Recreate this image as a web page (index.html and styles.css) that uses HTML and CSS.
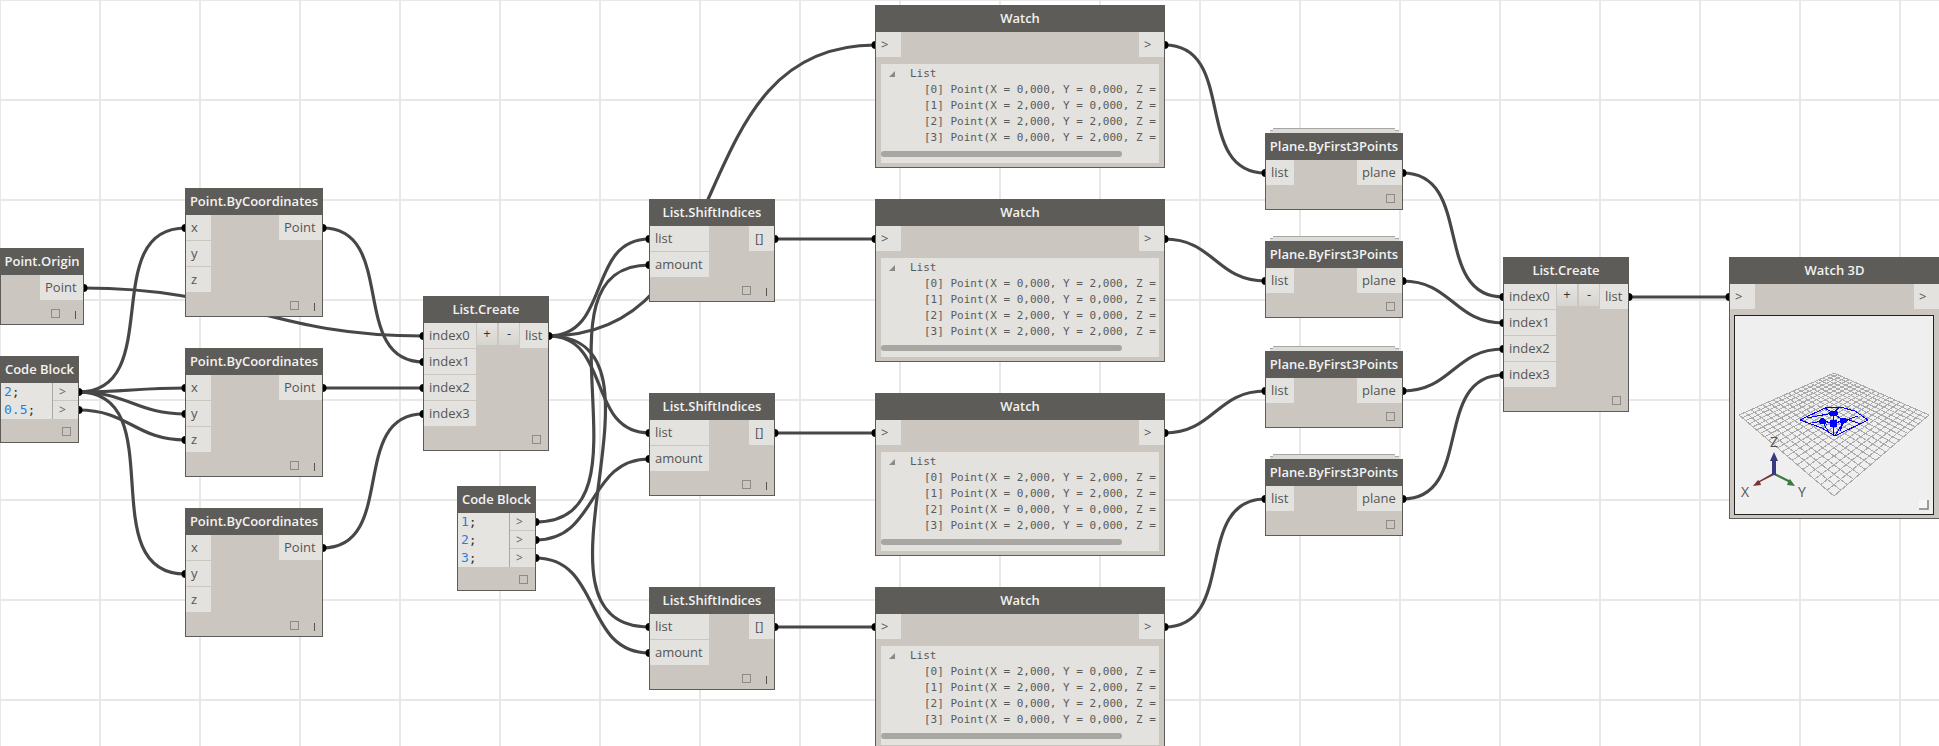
FILE: index.html
```html
<!DOCTYPE html>
<html lang="en">
<head>
    <meta charset="UTF-8">
    <title>Dynamo graph</title>
    <link rel="stylesheet" href="styles.css">
</head>
<body>
    <div class="canvas">
        <svg class="wires" id="wires" width="1939" height="746"></svg>

        <div class="node n-origin">
            <div class="title">Point.Origin</div>
            <div class="ports">
                <div class="outs"><div class="port out-point" data-port="origin.out">Point</div></div>
            </div>
            <div class="foot"><i class="box"></i><i class="lace"></i></div>
        </div>

        <div class="node n-code1">
            <div class="title">Code Block</div>
            <div class="code">
                <div class="code-text"><div><b>2</b>;</div><div><b>0.5</b>;</div></div>
                <div class="code-outs">
                    <div class="code-out" data-port="code1.0">&gt;</div>
                    <div class="code-out" data-port="code1.1">&gt;</div>
                </div>
            </div>
            <div class="foot"><i class="box"></i></div>
        </div>

        <div class="node n-pt1">
            <div class="title">Point.ByCoordinates</div>
            <div class="ports">
                <div class="ins">
                    <div class="port in-xyz" data-port="pt1.x">x</div>
                    <div class="port in-xyz" data-port="pt1.y">y</div>
                    <div class="port in-xyz" data-port="pt1.z">z</div>
                </div>
                <div class="outs"><div class="port out-point" data-port="pt1.out">Point</div></div>
            </div>
            <div class="foot"><i class="box"></i><i class="lace"></i></div>
        </div>

        <div class="node n-pt2">
            <div class="title">Point.ByCoordinates</div>
            <div class="ports">
                <div class="ins">
                    <div class="port in-xyz" data-port="pt2.x">x</div>
                    <div class="port in-xyz" data-port="pt2.y">y</div>
                    <div class="port in-xyz" data-port="pt2.z">z</div>
                </div>
                <div class="outs"><div class="port out-point" data-port="pt2.out">Point</div></div>
            </div>
            <div class="foot"><i class="box"></i><i class="lace"></i></div>
        </div>

        <div class="node n-pt3">
            <div class="title">Point.ByCoordinates</div>
            <div class="ports">
                <div class="ins">
                    <div class="port in-xyz" data-port="pt3.x">x</div>
                    <div class="port in-xyz" data-port="pt3.y">y</div>
                    <div class="port in-xyz" data-port="pt3.z">z</div>
                </div>
                <div class="outs"><div class="port out-point" data-port="pt3.out">Point</div></div>
            </div>
            <div class="foot"><i class="box"></i><i class="lace"></i></div>
        </div>

        <div class="node n-create1">
            <div class="title">List.Create</div>
            <div class="ports">
                <div class="ins">
                    <div class="port in-index" data-port="create1.0">index0</div>
                    <div class="port in-index" data-port="create1.1">index1</div>
                    <div class="port in-index" data-port="create1.2">index2</div>
                    <div class="port in-index" data-port="create1.3">index3</div>
                </div>
                <div class="btns"><div class="btn">+</div><div class="btn">-</div></div>
                <div class="outs"><div class="port out-list" data-port="create1.out">list</div></div>
            </div>
            <div class="foot"><i class="box"></i></div>
        </div>

        <div class="node n-code2">
            <div class="title">Code Block</div>
            <div class="code">
                <div class="code-text"><div><b>1</b>;</div><div><b>2</b>;</div><div><b>3</b>;</div></div>
                <div class="code-outs">
                    <div class="code-out" data-port="code2.0">&gt;</div>
                    <div class="code-out" data-port="code2.1">&gt;</div>
                    <div class="code-out" data-port="code2.2">&gt;</div>
                </div>
            </div>
            <div class="foot"><i class="box"></i></div>
        </div>

        <div class="node n-shift1">
            <div class="title">List.ShiftIndices</div>
            <div class="ports">
                <div class="ins">
                    <div class="port in-shift" data-port="shift1.list">list</div>
                    <div class="port in-shift" data-port="shift1.amount">amount</div>
                </div>
                <div class="outs"><div class="port out-arr" data-port="shift1.out">[]</div></div>
            </div>
            <div class="foot"><i class="box"></i><i class="lace"></i></div>
        </div>

        <div class="node n-shift2">
            <div class="title">List.ShiftIndices</div>
            <div class="ports">
                <div class="ins">
                    <div class="port in-shift" data-port="shift2.list">list</div>
                    <div class="port in-shift" data-port="shift2.amount">amount</div>
                </div>
                <div class="outs"><div class="port out-arr" data-port="shift2.out">[]</div></div>
            </div>
            <div class="foot"><i class="box"></i><i class="lace"></i></div>
        </div>

        <div class="node n-shift3">
            <div class="title">List.ShiftIndices</div>
            <div class="ports">
                <div class="ins">
                    <div class="port in-shift" data-port="shift3.list">list</div>
                    <div class="port in-shift" data-port="shift3.amount">amount</div>
                </div>
                <div class="outs"><div class="port out-arr" data-port="shift3.out">[]</div></div>
            </div>
            <div class="foot"><i class="box"></i><i class="lace"></i></div>
        </div>

        <div class="node n-watch1">
            <div class="title">Watch</div>
            <div class="ports">
                <div class="ins"><div class="port in-arrow" data-port="watch1.in">&gt;</div></div>
                <div class="outs"><div class="port in-arrow" data-port="watch1.out">&gt;</div></div>
            </div>
            <div class="panel">
                <div class="list-head"><i class="twist"></i>List</div>
                <div class="item">[0] Point(X = 0,000, Y = 0,000, Z =</div>
                <div class="item">[1] Point(X = 2,000, Y = 0,000, Z =</div>
                <div class="item">[2] Point(X = 2,000, Y = 2,000, Z =</div>
                <div class="item">[3] Point(X = 0,000, Y = 2,000, Z =</div>
                <div class="scroll"></div>
            </div>
        </div>

        <div class="node n-watch2">
            <div class="title">Watch</div>
            <div class="ports">
                <div class="ins"><div class="port in-arrow" data-port="watch2.in">&gt;</div></div>
                <div class="outs"><div class="port in-arrow" data-port="watch2.out">&gt;</div></div>
            </div>
            <div class="panel">
                <div class="list-head"><i class="twist"></i>List</div>
                <div class="item">[0] Point(X = 0,000, Y = 2,000, Z =</div>
                <div class="item">[1] Point(X = 0,000, Y = 0,000, Z =</div>
                <div class="item">[2] Point(X = 2,000, Y = 0,000, Z =</div>
                <div class="item">[3] Point(X = 2,000, Y = 2,000, Z =</div>
                <div class="scroll"></div>
            </div>
        </div>

        <div class="node n-watch3">
            <div class="title">Watch</div>
            <div class="ports">
                <div class="ins"><div class="port in-arrow" data-port="watch3.in">&gt;</div></div>
                <div class="outs"><div class="port in-arrow" data-port="watch3.out">&gt;</div></div>
            </div>
            <div class="panel">
                <div class="list-head"><i class="twist"></i>List</div>
                <div class="item">[0] Point(X = 2,000, Y = 2,000, Z =</div>
                <div class="item">[1] Point(X = 0,000, Y = 2,000, Z =</div>
                <div class="item">[2] Point(X = 0,000, Y = 0,000, Z =</div>
                <div class="item">[3] Point(X = 2,000, Y = 0,000, Z =</div>
                <div class="scroll"></div>
            </div>
        </div>

        <div class="node n-watch4">
            <div class="title">Watch</div>
            <div class="ports">
                <div class="ins"><div class="port in-arrow" data-port="watch4.in">&gt;</div></div>
                <div class="outs"><div class="port in-arrow" data-port="watch4.out">&gt;</div></div>
            </div>
            <div class="panel">
                <div class="list-head"><i class="twist"></i>List</div>
                <div class="item">[0] Point(X = 2,000, Y = 0,000, Z =</div>
                <div class="item">[1] Point(X = 2,000, Y = 2,000, Z =</div>
                <div class="item">[2] Point(X = 0,000, Y = 2,000, Z =</div>
                <div class="item">[3] Point(X = 0,000, Y = 0,000, Z =</div>
                <div class="scroll"></div>
            </div>
        </div>

        <div class="node stacked n-plane1">
            <div class="title">Plane.ByFirst3Points</div>
            <div class="ports">
                <div class="ins"><div class="port in-list" data-port="plane1.in">list</div></div>
                <div class="outs"><div class="port out-plane" data-port="plane1.out">plane</div></div>
            </div>
            <div class="foot"><i class="box"></i></div>
        </div>

        <div class="node stacked n-plane2">
            <div class="title">Plane.ByFirst3Points</div>
            <div class="ports">
                <div class="ins"><div class="port in-list" data-port="plane2.in">list</div></div>
                <div class="outs"><div class="port out-plane" data-port="plane2.out">plane</div></div>
            </div>
            <div class="foot"><i class="box"></i></div>
        </div>

        <div class="node stacked n-plane3">
            <div class="title">Plane.ByFirst3Points</div>
            <div class="ports">
                <div class="ins"><div class="port in-list" data-port="plane3.in">list</div></div>
                <div class="outs"><div class="port out-plane" data-port="plane3.out">plane</div></div>
            </div>
            <div class="foot"><i class="box"></i></div>
        </div>

        <div class="node stacked n-plane4">
            <div class="title">Plane.ByFirst3Points</div>
            <div class="ports">
                <div class="ins"><div class="port in-list" data-port="plane4.in">list</div></div>
                <div class="outs"><div class="port out-plane" data-port="plane4.out">plane</div></div>
            </div>
            <div class="foot"><i class="box"></i></div>
        </div>

        <div class="node n-create2">
            <div class="title">List.Create</div>
            <div class="ports">
                <div class="ins">
                    <div class="port in-index" data-port="create2.0">index0</div>
                    <div class="port in-index" data-port="create2.1">index1</div>
                    <div class="port in-index" data-port="create2.2">index2</div>
                    <div class="port in-index" data-port="create2.3">index3</div>
                </div>
                <div class="btns"><div class="btn">+</div><div class="btn">-</div></div>
                <div class="outs"><div class="port out-list" data-port="create2.out">list</div></div>
            </div>
            <div class="foot"><i class="box"></i></div>
        </div>

        <div class="node n-watch3d">
            <div class="title">Watch 3D</div>
            <div class="ports">
                <div class="ins"><div class="port in-arrow" data-port="view.in">&gt;</div></div>
                <div class="outs"><div class="port in-arrow">&gt;</div></div>
            </div>
            <div class="view">
                <svg id="scene" width="198" height="198" viewBox="1 1 198 198">
                    <g id="floor" class="floor"></g>
                    <g class="planes">
                        <path d="M66 105 L91 93 L106 92 L121 96 L134 105 L101 121 L88 113 Z"/>
                        <path d="M73 103 L99 98 L110 106 L101 121 M78 108 L88 106 L99 108 L110 106 L124 101 M88 106 L94 116 M99 98 L99 121 M91 93 L99 98 L106 92 M110 106 L106 116 M112 104 L127 109"/>
                        <path class="blob" d="M95 98 L99 96 L103 97 L104 99 L100 101 L96 100 Z"/>
                        <path class="blob" d="M85 107 L88 103 L91 105 L92 109 L86 108 Z"/>
                        <path class="blob" d="M106 104 L110 103 L114 105 L109 109 L106 107 Z"/>
                        <rect x="96" y="105" width="7" height="7"/>
                    </g>
                    <path class="axis-x" d="M40 160 L26 167 L27 170 L19 171 L24 165 L25 166 L39 158 Z"/>
                    <path class="axis-y" d="M41 158 L55 165 L56 164 L61 171 L53 170 L54 167 L40 160 Z"/>
                    <path class="axis-z" d="M38 160 L38 146 L36 146 L40 137 L44 146 L42 146 L42 160 Z"/>
                    <text class="axis-label" x="40" y="132">Z</text>
                    <text class="axis-label" x="11" y="182">X</text>
                    <text class="axis-label" x="68" y="182">Y</text>
                    <rect class="grip" x="185" y="185" width="10" height="10"/>
                    <path class="grip-edge" d="M185 194 H194 V185"/>
                </svg>
            </div>
        </div>
    </div>
    <script src="script.js"></script>
</body>
</html>
```

FILE: styles.css
```css
* {
    margin: 0;
    padding: 0;
    box-sizing: border-box;
}

body {
    font-family: "Open Sans", sans-serif;
    background-color: white;
}

.canvas {
    position: relative;
    z-index: 0;
    width: 1939px;
    height: 746px;
    overflow: hidden;
    background-color: white;
    background-image:
        linear-gradient(90deg, #e8e8e8 2px, transparent 2px),
        linear-gradient(#e8e8e8 2px, transparent 2px);
    background-size: 100px 100px;
    background-position: -1px -1px;
}

.wires {
    position: absolute;
    left: 0;
    top: 0;
}

.wire {
    fill: none;
    stroke: #474747;
    stroke-width: 3.2;
}

.dot {
    fill: #000;
}

/* nodes */

.node {
    position: absolute;
    display: flex;
    flex-direction: column;
    background-color: #cbc7c0;
    border: 1px solid #5e5c59;
    border-top: 0;
}

.title {
    height: 27px;
    margin: 0 -1px;
    background-color: #5e5c59;
    color: #f2f2f0;
    font-size: 13px;
    font-weight: 600;
    line-height: 27px;
    text-align: center;
    white-space: nowrap;
}

.ports {
    display: flex;
    justify-content: space-between;
}

.ins {
    display: flex;
    flex-direction: column;
}

.outs {
    margin-left: auto;
}

.port {
    height: 25px;
    margin-bottom: 1px;
    padding-left: 5px;
    background-color: #e3e2de;
    color: #555;
    font-size: 13px;
    line-height: 24px;
}

.in-xyz { width: 25px; }
.in-index { width: 52px; }
.in-shift { width: 59px; }
.in-list { width: 28px; }
.in-arrow { width: 25px; padding-left: 5px; }
.out-point { width: 43px; }
.out-list { width: 28px; }
.out-plane { width: 45px; }
.out-arr { width: 25px; padding-left: 6px; }

.btns {
    display: flex;
    gap: 2px;
    margin-left: 1px;
    margin-right: 1px;
}

.btn {
    width: 20px;
    height: 22px;
    background: linear-gradient(#e6e5e1, #d6d4cf);
    color: #333;
    font-size: 13px;
    line-height: 20px;
    text-align: center;
}

.foot {
    display: flex;
    justify-content: flex-end;
    height: 23px;
    padding: 8px 7px 0 0;
}

.box {
    width: 9px;
    height: 9px;
    border: 1px solid #8d8b86;
}

.lace {
    width: 1px;
    height: 8px;
    margin: 2px 0 0 15px;
    background-color: #55544f;
}

/* code blocks */

.code {
    display: flex;
}

.code-text {
    width: 52px;
    padding-left: 3px;
    background-color: #e6e4e0;
    border-right: 1px solid #aaa8a3;
    color: #333;
    font-family: "DejaVu Sans Mono", monospace;
    font-size: 13px;
    line-height: 18px;
}

.code-text b {
    color: #1e80e8;
    font-weight: normal;
}

.code-out {
    width: 25px;
    height: 18px;
    padding-left: 6px;
    background-color: #e3e2de;
    border-bottom: 1px solid #cbc7c0;
    color: #666;
    font-size: 12px;
    line-height: 17px;
}

.code-out:last-child {
    border-bottom: 0;
}

/* watch */

.panel {
    height: 99px;
    margin: 6px 5px 4px;
    padding-top: 2px;
    overflow: hidden;
    background-color: #e3e2de;
    color: #5a5a58;
    font-family: "DejaVu Sans Mono", monospace;
    font-size: 11px;
    line-height: 16px;
    white-space: nowrap;
}

.list-head {
    display: flex;
    align-items: center;
    padding-left: 8px;
}

.twist {
    width: 0;
    height: 0;
    margin-right: 15px;
    border-style: solid;
    border-width: 0 0 6px 6px;
    border-color: transparent transparent #8a8985 transparent;
}

.item {
    padding-left: 43px;
}

.scroll {
    width: 241px;
    height: 6px;
    margin-top: 5px;
    border-radius: 3px;
    background-color: #a7a6a1;
}

.stacked::before,
.stacked::after {
    content: "";
    position: absolute;
    z-index: -1;
    background-color: #dcdbd7;
    border-top: 1px solid #a8a7a3;
}

.stacked::before {
    top: -3px;
    left: 4px;
    right: 3px;
    height: 4px;
}

.stacked::after {
    top: -5px;
    left: 7px;
    right: 7px;
    height: 3px;
}

/* watch 3d */

.view {
    width: 200px;
    height: 200px;
    margin: 5px 0 3px 4px;
    border: 1px solid #222;
    background-color: #efefef;
}

.view svg {
    display: block;
}

.floor line {
    stroke: #ababab;
    stroke-width: 1;
    shape-rendering: crispEdges;
}

.planes path {
    fill: none;
    stroke: #0000ff;
    stroke-width: 1;
    shape-rendering: crispEdges;
}

.planes .blob {
    fill: #0000ff;
}

.planes rect {
    fill: #0000ff;
}

.axis-x { fill: #7b3534; }
.axis-y { fill: #3f7a3f; }
.axis-z { fill: #39397f; }

.axis-label {
    fill: #555;
    font-size: 14px;
    text-anchor: middle;
}

.grip {
    fill: #f6f6f6;
}

.grip-edge {
    fill: none;
    stroke: #808080;
    stroke-width: 1.5;
}

/* node positions on the graph */

.n-origin { left: 0; top: 248px; width: 84px; }
.n-code1 { left: 0; top: 356px; width: 79px; }
.n-pt1 { left: 185px; top: 188px; width: 138px; }
.n-pt2 { left: 185px; top: 348px; width: 138px; }
.n-pt3 { left: 185px; top: 508px; width: 138px; }
.n-create1 { left: 423px; top: 296px; width: 126px; }
.n-code2 { left: 457px; top: 486px; width: 79px; }
.n-shift1 { left: 649px; top: 199px; width: 126px; }
.n-shift2 { left: 649px; top: 393px; width: 126px; }
.n-shift3 { left: 649px; top: 587px; width: 126px; }
.n-watch1 { left: 875px; top: 5px; width: 290px; }
.n-watch2 { left: 875px; top: 199px; width: 290px; }
.n-watch3 { left: 875px; top: 393px; width: 290px; }
.n-watch4 { left: 875px; top: 587px; width: 290px; }
.n-plane1 { left: 1265px; top: 133px; width: 138px; }
.n-plane2 { left: 1265px; top: 241px; width: 138px; }
.n-plane3 { left: 1265px; top: 351px; width: 138px; }
.n-plane4 { left: 1265px; top: 459px; width: 138px; }
.n-create2 { left: 1503px; top: 257px; width: 126px; }
.n-watch3d { left: 1729px; top: 257px; width: 211px; }
```

FILE: script.js
```js
const SVG_NS = 'http://www.w3.org/2000/svg';

const links = [
    ['origin.out', 'create1.0'],
    ['code1.0', 'pt1.x'],
    ['code1.0', 'pt2.x'],
    ['code1.0', 'pt2.y'],
    ['code1.0', 'pt3.y'],
    ['code1.1', 'pt2.z'],
    ['pt1.out', 'create1.1'],
    ['pt2.out', 'create1.2'],
    ['pt3.out', 'create1.3'],
    ['create1.out', 'shift1.list'],
    ['create1.out', 'shift2.list'],
    ['create1.out', 'shift3.list'],
    ['create1.out', 'watch1.in'],
    ['code2.0', 'shift1.amount'],
    ['code2.1', 'shift2.amount'],
    ['code2.2', 'shift3.amount'],
    ['shift1.out', 'watch2.in'],
    ['shift2.out', 'watch3.in'],
    ['shift3.out', 'watch4.in'],
    ['watch1.out', 'plane1.in'],
    ['watch2.out', 'plane2.in'],
    ['watch3.out', 'plane3.in'],
    ['watch4.out', 'plane4.in'],
    ['plane1.out', 'create2.0'],
    ['plane2.out', 'create2.1'],
    ['plane3.out', 'create2.2'],
    ['plane4.out', 'create2.3'],
    ['create2.out', 'view.in']
];

function add(parent, tag, attrs) {
    const el = document.createElementNS(SVG_NS, tag);
    Object.keys(attrs).forEach(k => el.setAttribute(k, attrs[k]));
    parent.appendChild(el);
    return el;
}

function anchor(name, side) {
    const port = document.querySelector(`[data-port="${name}"]`);
    const node = port.closest('.node').getBoundingClientRect();
    const box = port.getBoundingClientRect();
    return {
        x: side === 'out' ? node.right - 0.5 : node.left + 0.5,
        y: Math.round(box.top + box.height / 2)
    };
}

function drawWires() {
    const svg = document.getElementById('wires');
    const dots = new Set();
    links.forEach(([from, to]) => {
        const a = anchor(from, 'out');
        const b = anchor(to, 'in');
        // control points sit out by a share of the wire's length, long wires overshoot
        const reach = Math.hypot(b.x - a.x, b.y - a.y) * 0.45;
        add(svg, 'path', {
            class: 'wire',
            d: `M${a.x} ${a.y} C${a.x + reach} ${a.y} ${b.x - reach} ${b.y} ${b.x} ${b.y}`
        });
        dots.add(`${a.x},${a.y}`);
        dots.add(`${b.x},${b.y}`);
    });
    dots.forEach(d => {
        const [x, y] = d.split(',');
        add(svg, 'circle', { class: 'dot', cx: x, cy: y, r: 4 });
    });
}

// the floor grid is a flat square seen in perspective, so map it with a homography
function floorMap(p0, p1, p2, p3) {
    const dx1 = p1[0] - p2[0], dx2 = p3[0] - p2[0], sx = p0[0] - p1[0] + p2[0] - p3[0];
    const dy1 = p1[1] - p2[1], dy2 = p3[1] - p2[1], sy = p0[1] - p1[1] + p2[1] - p3[1];
    const den = dx1 * dy2 - dx2 * dy1;
    const g = (sx * dy2 - dx2 * sy) / den;
    const h = (dx1 * sy - sx * dy1) / den;
    const a = p1[0] - p0[0] + g * p1[0], b = p3[0] - p0[0] + h * p3[0];
    const d = p1[1] - p0[1] + g * p1[1], e = p3[1] - p0[1] + h * p3[1];
    return (u, v) => {
        const w = g * u + h * v + 1;
        return [(a * u + b * v + p0[0]) / w, (d * u + e * v + p0[1]) / w];
    };
}

function drawFloor() {
    const group = document.getElementById('floor');
    const map = floorMap([100, 58], [195, 100], [100, 181], [5, 100]);
    const cells = 20;
    for (let i = 0; i <= cells; i++) {
        const t = i / cells;
        [[map(t, 0), map(t, 1)], [map(0, t), map(1, t)]].forEach(([p, q]) => {
            add(group, 'line', { x1: p[0], y1: p[1], x2: q[0], y2: q[1] });
        });
    }
}

drawWires();
drawFloor();
```
